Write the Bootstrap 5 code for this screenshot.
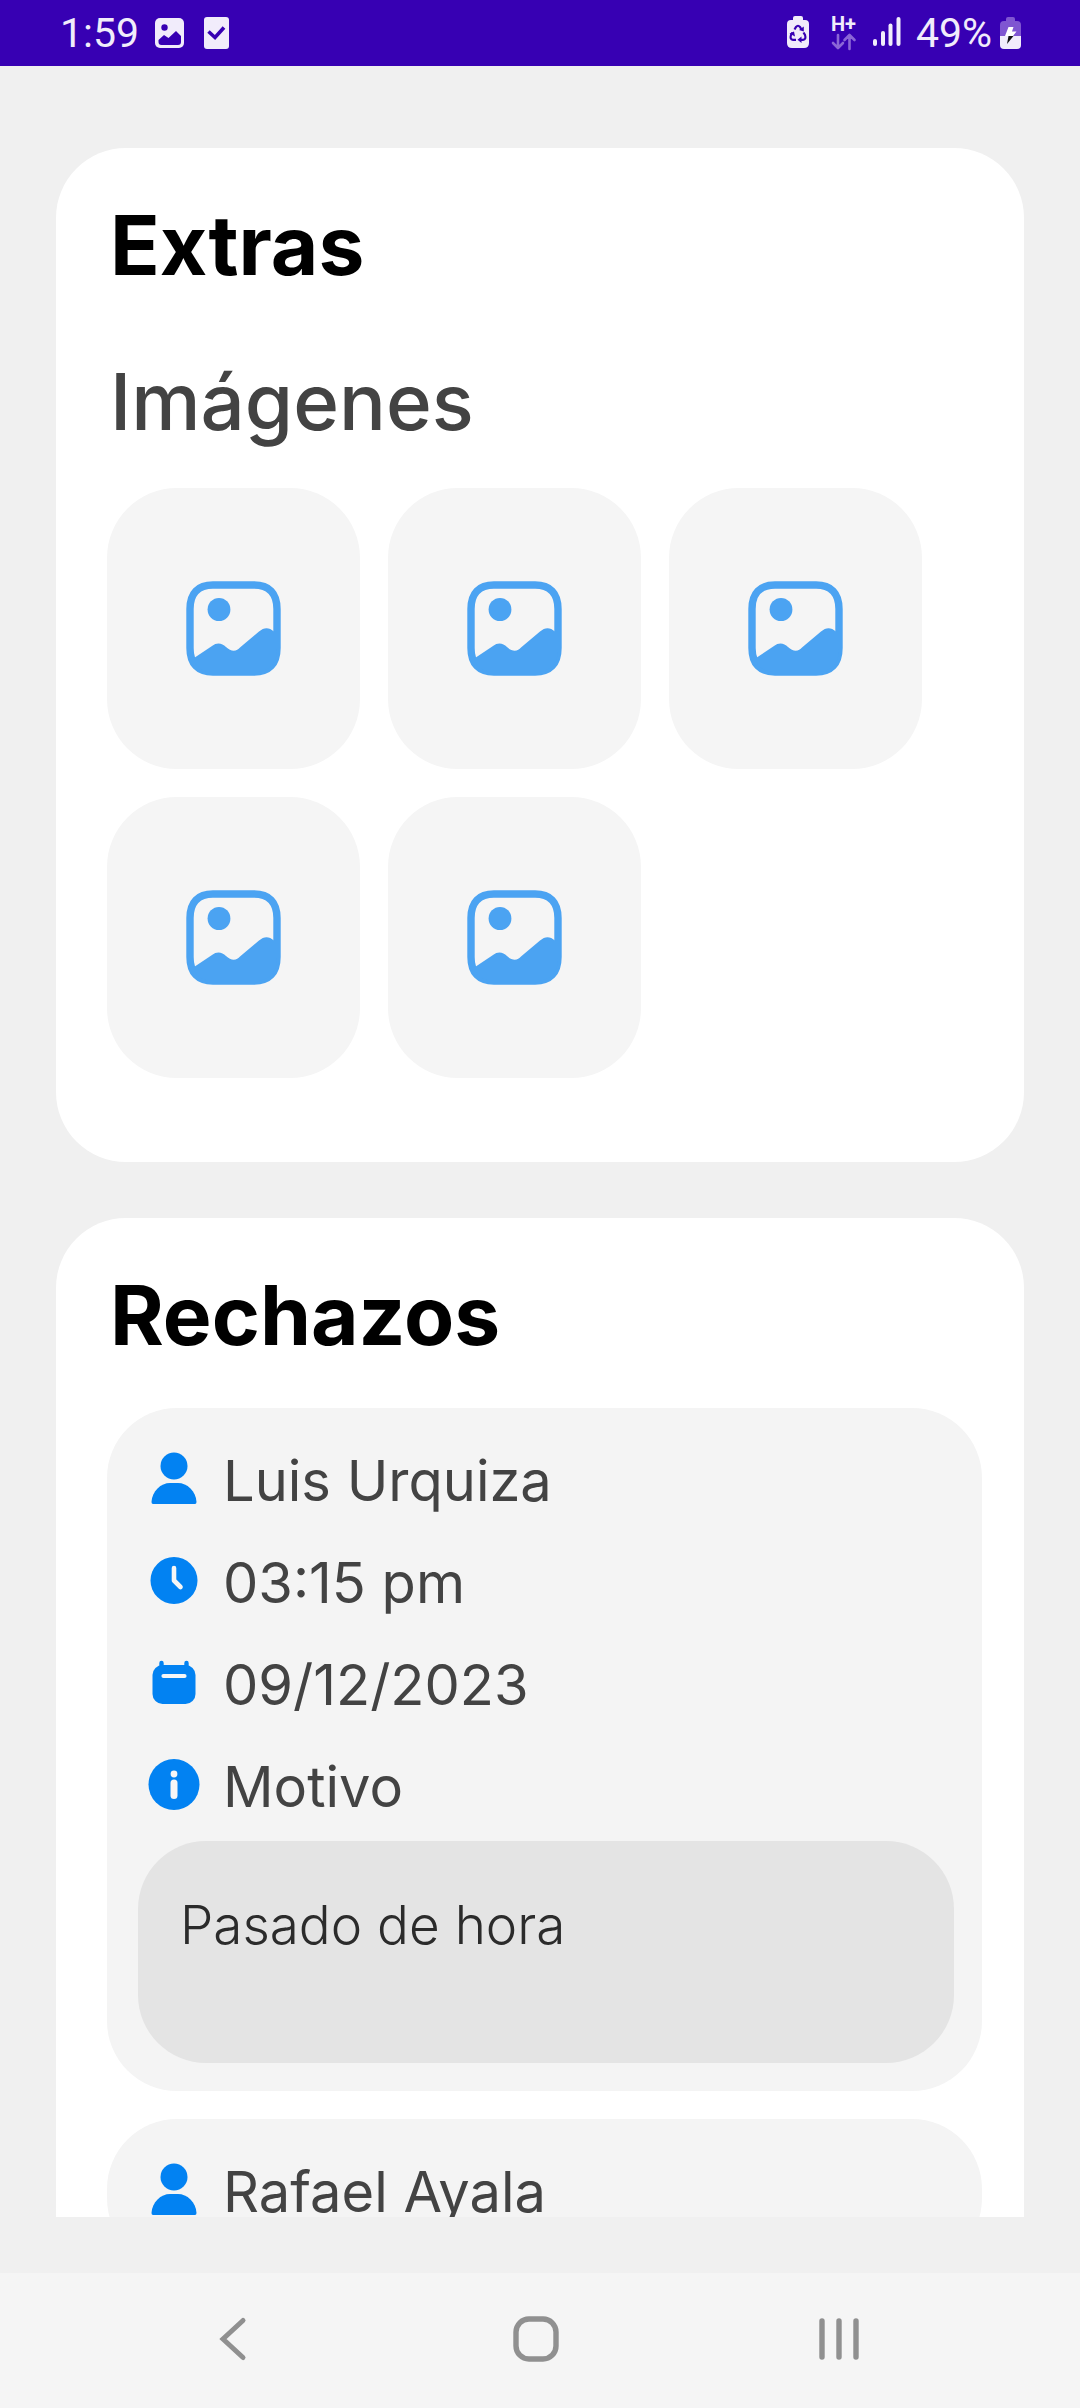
<!DOCTYPE html>
<html lang="es">
<head>
<meta charset="utf-8">
<meta name="viewport" content="width=device-width, initial-scale=1">
<title>Extras y rechazos</title>
<link href="https://cdn.jsdelivr.net/npm/bootstrap@5.3.0/dist/css/bootstrap.min.css" rel="stylesheet">
<style>
  body { background: #f0f0f0; font-family: Inter, "Liberation Sans", sans-serif; color: #434343; }
  .statusbar { background: #3700b3; color: #f1ecfb; height: 66px; padding: 0 59px 0 60px; font-family: Roboto, "Liberation Sans", sans-serif; font-size: 41px; line-height: 64px; }
  .statusbar svg { flex: none; }
  .content-scroll { padding: 82px 56px 0; margin-bottom: 56px; scrollbar-width: none; }
  .content-scroll::-webkit-scrollbar { display: none; }
  .panel { background: #fff; border-radius: 70px; padding: 48px 42px 84px 51px; margin-bottom: 56px; }
  .panel h1 { font-size: 82px; line-height: 100px; font-weight: 700; color: #000; margin: 0 0 42px 3px; }
  .panel h2 { font-size: 78px; line-height: 100px; font-weight: 500; color: #434343; margin: 56px 0 36px 3px; }
  .panel h1.followed { margin-bottom: 0; }
  .tile-list, .reject-list { gap: 28px; }
  .tile { width: 253px; height: 281px; border: 0; border-radius: 70px; background: #f5f5f5; color: #4ba3f2; }
  .reject { background: #f4f4f4; border-radius: 70px; padding: 19px 28px 28px 31px; }
  .line-item { height: 102px; font-size: 56px; line-height: 60px; }
  .line-item svg { flex: none; width: 72px; height: 60px; color: #0282f2; }
  .line-item span { padding: 6px 0 0 13px; }
  .reason { background: #e4e4e4; color: #2b2b2b; border-radius: 68px; min-height: 222px; margin-top: 6px; padding: 54px 42px; font-size: 53px; line-height: 60px; font-weight: 300; }
  .sysnav { background: #f5f5f5; height: 135px; padding: 0 90px 4px 81px; }
  .sysnav button { background: none; border: 0; padding: 0; color: #909090; }
</style>
</head>
<body class="vh-100 d-flex flex-column overflow-hidden">

<svg class="d-none" aria-hidden="true">
  <symbol id="i-photo" viewBox="0 0 95 95">
    <path d="M4 28C4 12 12 4 27 4H68C83 4 91 12 91 28V67C91 83 83 91 68 91H27C12 91 4 83 4 67Z" fill="none" stroke="currentColor" stroke-width="7.4"/>
    <ellipse cx="33" cy="28.5" rx="11.4" ry="11.6" fill="currentColor"/>
    <path d="M8 77L26 65C31 61 36 62 40 66C45 71 51 70.500 54 66.500L73 50.500C78 46 83 46 88 50.500H91V67C91 83 83 91 68 91H27C17 91 11 87 8 80Z" fill="currentColor"/>
  </symbol>
  <symbol id="i-user" viewBox="0 0 72 60">
    <circle cx="36" cy="18" r="13.500" fill="currentColor"/>
    <path d="M15 56Q13.500 56 13.500 54C14 43 23 35 32 35H40C49 35 58 43 58.500 54Q58.500 56 57 56Z" fill="currentColor"/>
  </symbol>
  <symbol id="i-clock" viewBox="0 0 72 60">
    <circle cx="36" cy="30.500" r="23.500" fill="currentColor"/>
    <path d="M36 18V30.500L42.500 37" fill="none" stroke="#f6f6f6" stroke-width="4.600" stroke-linecap="round" stroke-linejoin="round"/>
  </symbol>
  <symbol id="i-calendar" viewBox="0 0 72 60">
    <rect x="14.500" y="13" width="43" height="39" rx="10" fill="currentColor"/>
    <path d="M23.500 11V18M48.500 11V18" stroke="currentColor" stroke-width="4.400" stroke-linecap="round"/>
    <path d="M25.500 24H46.500" stroke="#f6f6f6" stroke-width="4.200" stroke-linecap="round"/>
  </symbol>
  <symbol id="i-info" viewBox="0 0 72 60">
    <circle cx="36" cy="30.500" r="25.500" fill="currentColor"/>
    <circle cx="36" cy="20" r="3.400" fill="#f6f6f6"/>
    <path d="M36 29V41.500" stroke="#f6f6f6" stroke-width="7" stroke-linecap="round"/>
  </symbol>
</svg>

<header class="statusbar d-flex align-items-center justify-content-between flex-shrink-0">
  <div class="d-flex align-items-center">
    <span>1:59</span>
    <svg class="ms-3" width="29" height="30" viewBox="0 0 29 30" aria-label="Imagen"><rect width="29" height="30" rx="5" fill="#f1ecfb"/><circle cx="9.500" cy="9.500" r="3.200" fill="#3700b3"/><path d="M3.500 22L9 17L13.500 20L21 13L26 18V24Q26 27 23 27H6.500Q3.500 27 3.500 24Z" fill="#3700b3"/></svg>
    <svg class="ms-3" width="29" height="32" viewBox="-4 0 29 32" aria-label="Tarea"><rect x="0" width="25" height="32" rx="3" fill="#f1ecfb"/><path d="M4.500 14.500L11 20.500L20 10.500" fill="none" stroke="#3700b3" stroke-width="3.600"/></svg>
  </div>
  <div class="d-flex align-items-center">
    <svg width="129" height="40" viewBox="0 0 129 40" aria-label="Batería y red">
      <g fill="#f1ecfb">
        <path d="M6 7V5Q6 3 8 3H14Q16 3 16 5V7H18Q22 7 22 11V30Q22 35 17 35H5Q0 35 0 30V11Q0 7 4 7Z"/>
        <rect x="86" y="26" width="4" height="7" rx="2"/><rect x="94" y="18" width="4" height="15" rx="2"/><rect x="101.500" y="10.500" width="4" height="22.500" rx="2"/><rect x="109.500" y="4" width="4" height="29" rx="2"/>
      </g>
      <path d="M7.500 16.500L9 14Q11 11.500 13 14L14.500 16.500M16.500 19.500L18 22Q19.500 26.500 16 26.800H13.500M9 26.800H6Q2.500 26.500 4 22L5.500 19.500" fill="none" stroke="#3700b3" stroke-width="2.200"/>
      <path d="M16.800 13.500V18.500L12 17ZM14.500 23.500V30L10.500 26.800ZM2.500 20.500L7 18.500L8 23.500Z" fill="#3700b3"/>
      <text x="44" y="18" font-family="Roboto, sans-serif" font-size="20" font-weight="700" fill="#f1ecfb">H+</text>
      <path d="M51 22V34M46 30L51 35L56 30M62.500 36V23M57.500 27L62.500 22L67.500 27" fill="none" stroke="#8b66d6" stroke-width="2.600" stroke-linecap="round" stroke-linejoin="round"/>
    </svg>
    <span>49%</span>
    <svg class="ms-2" width="21" height="32" viewBox="0 0 21 32" aria-label="Cargando"><path d="M6 4V2Q6 0 8 0H13Q15 0 15 2V4H17Q21 4 21 8V19H0V8Q0 4 4 4Z" fill="#7f56d1"/><path d="M0 19H21V28Q21 32 17 32H4Q0 32 0 28Z" fill="#f1ecfb"/><path d="M8.500 10H13.500L12 14.500H16.500L13 19H5Z" fill="#fff"/><path d="M8.500 19H13.500L7 27Z" fill="#111"/></svg>
  </div>
</header>

<main class="content-scroll flex-grow-1 overflow-auto">
  <section class="panel">
    <h1 class="followed">Extras</h1>
    <h2>Imágenes</h2>
    <div class="tile-list d-flex flex-wrap">
      <button type="button" class="tile d-flex align-items-center justify-content-center" aria-label="Imagen 1"><svg width="95" height="95"><use href="#i-photo"/></svg></button>
      <button type="button" class="tile d-flex align-items-center justify-content-center" aria-label="Imagen 2"><svg width="95" height="95"><use href="#i-photo"/></svg></button>
      <button type="button" class="tile d-flex align-items-center justify-content-center" aria-label="Imagen 3"><svg width="95" height="95"><use href="#i-photo"/></svg></button>
      <button type="button" class="tile d-flex align-items-center justify-content-center" aria-label="Imagen 4"><svg width="95" height="95"><use href="#i-photo"/></svg></button>
      <button type="button" class="tile d-flex align-items-center justify-content-center" aria-label="Imagen 5"><svg width="95" height="95"><use href="#i-photo"/></svg></button>
    </div>
  </section>

  <section class="panel">
    <h1>Rechazos</h1>
    <div class="reject-list d-flex flex-column">
      <article class="reject">
        <div class="line-item d-flex align-items-center"><svg><use href="#i-user"/></svg><span>Luis Urquiza</span></div>
        <div class="line-item d-flex align-items-center"><svg><use href="#i-clock"/></svg><span>03:15 pm</span></div>
        <div class="line-item d-flex align-items-center"><svg><use href="#i-calendar"/></svg><span>09/12/2023</span></div>
        <div class="line-item d-flex align-items-center"><svg><use href="#i-info"/></svg><span>Motivo</span></div>
        <div class="reason">Pasado de hora</div>
      </article>
      <article class="reject">
        <div class="line-item d-flex align-items-center"><svg><use href="#i-user"/></svg><span>Rafael Ayala</span></div>
      </article>
    </div>
  </section>
</main>

<nav class="sysnav d-flex align-items-center flex-shrink-0" aria-label="Sistema">
  <button type="button" class="flex-fill" aria-label="Atrás"><svg width="46" height="48" viewBox="0 0 46 48"><path d="M33 5.500L13 24L33 42.500" fill="none" stroke="currentColor" stroke-width="5" stroke-linecap="round"/></svg></button>
  <button type="button" class="flex-fill" aria-label="Inicio"><svg width="46" height="48" viewBox="0 0 46 48"><rect x="3" y="4" width="40" height="40" rx="13" fill="none" stroke="currentColor" stroke-width="5.400"/></svg></button>
  <button type="button" class="flex-fill" aria-label="Recientes"><svg width="46" height="48" viewBox="0 0 46 48"><path d="M6 6V42M23 6V42M40 6V42" stroke="currentColor" stroke-width="5.400" stroke-linecap="round"/></svg></button>
</nav>

<script src="https://cdn.jsdelivr.net/npm/bootstrap@5.3.0/dist/js/bootstrap.bundle.min.js"></script>
</body>
</html>
